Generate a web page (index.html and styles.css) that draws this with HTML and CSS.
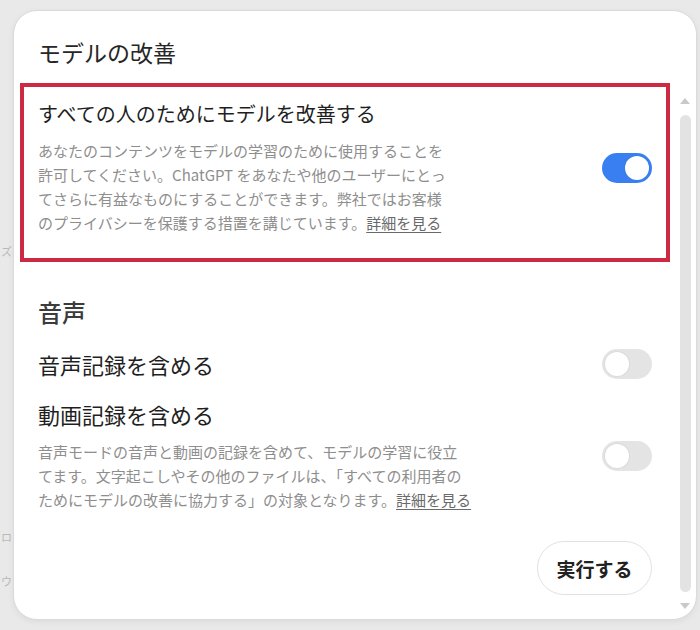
FILE: index.html
```html
<!DOCTYPE html>
<html lang="ja">
<head>
<meta charset="utf-8">
<title>モデルの改善</title>
<link rel="stylesheet" href="styles.css">
</head>
<body>
<div class="page">
  <div class="backdrop">
    <span class="bg-char c1">ズ</span>
    <span class="bg-char c2">ロ</span>
    <span class="bg-char c3">ウ</span>
  </div>
  <div class="card">
    <div class="main">
      <h1 class="title">モデルの改善</h1>

      <div class="row highlight">
        <div class="text">
          <div class="row-title small">すべての人のためにモデルを改善する</div>
          <p class="desc">あなたのコンテンツをモデルの学習のために使用することを<br>許可してください。ChatGPT をあなたや他のユーザーにとっ<br>てさらに有益なものにすることができます。弊社ではお客様<br>のプライバシーを保護する措置を講じています。<a class="link" href="#">詳細を見る</a></p>
        </div>
        <span class="toggle on"><span class="knob"></span></span>
      </div>

      <h2 class="section">音声</h2>

      <div class="row plain first">
        <div class="text">
          <div class="row-title">音声記録を含める</div>
        </div>
        <span class="toggle"><span class="knob"></span></span>
      </div>

      <div class="row plain second">
        <div class="text">
          <div class="row-title">動画記録を含める</div>
          <p class="desc">音声モードの音声と動画の記録を含めて、モデルの学習に役立<br>てます。文字起こしやその他のファイルは、「すべての利用者の<br>ためにモデルの改善に協力する」の対象となります。<a class="link" href="#">詳細を見る</a></p>
        </div>
        <span class="toggle"><span class="knob"></span></span>
      </div>

      <div class="footer">
        <button class="btn" type="button">実行する</button>
      </div>
    </div>
    <div class="scrollbar">
      <span class="arrow up"></span>
      <span class="thumb"></span>
      <span class="arrow down"></span>
    </div>
  </div>
</div>
</body>
</html>
```
FILE: styles.css
```css
* { box-sizing: border-box; }

html, body {
  margin: 0;
  padding: 0;
  width: 700px;
  height: 630px;
  overflow: hidden;
  background: #e9e9e9;
  font-family: "Noto Sans CJK JP", "Noto Sans", sans-serif;
}

.page {
  display: flex;
  padding-top: 10px;
  height: 630px;
}

.backdrop {
  width: 13px;
  flex: none;
  display: flex;
  flex-direction: column;
}

.bg-char {
  display: block;
  margin-left: 1px;
  font-size: 11px;
  line-height: 14px;
  color: #b9b9b9;
}
.c1 { margin-top: 234px; }
.c2 { margin-top: 272px; }
.c3 { margin-top: 30px; }

.card {
  width: 684px;
  height: 610px;
  flex: none;
  background: #ffffff;
  border: 1px solid #dadada;
  border-radius: 24px;
  box-shadow: 0 2px 6px rgba(0, 0, 0, 0.06);
  display: flex;
  overflow: hidden;
}

.main {
  flex: 1;
  padding: 26px 9px 0 6px;
  display: flex;
  flex-direction: column;
}

.title {
  margin: 0 0 16px 0;
  padding-left: 18px;
  font-size: 23px;
  line-height: 30px;
  font-weight: 400;
  color: #262626;
}

.row {
  display: flex;
  align-items: center;
  justify-content: space-between;
}

.highlight {
  border: 4px solid #cb2a42;
  padding: 13px 14px 23px 14px;
}

.plain {
  padding: 0 18px;
}
.plain.first { margin-top: 21px; }
.plain.second { margin-top: 20px; }

.row-title {
  font-size: 22px;
  line-height: 30px;
  color: #1f1f1f;
}
.row-title.small {
  font-size: 20px;
  line-height: 28px;
}

.desc {
  margin: 11px 0 0 0;
  font-size: 15px;
  line-height: 24px;
  color: #8e8e8e;
  white-space: nowrap;
}

.link {
  color: #6a6a6a;
  text-decoration: underline;
  text-underline-offset: 3px;
}

.section {
  margin: 34px 0 0 0;
  padding-left: 18px;
  font-size: 24px;
  line-height: 32px;
  font-weight: 500;
  color: #3c3c3c;
}

.toggle {
  flex: none;
  width: 50px;
  height: 30px;
  border-radius: 15px;
  background: #e4e4e4;
  padding: 3px;
  display: flex;
  justify-content: flex-start;
}
.toggle.on {
  background: #3a7ff1;
  justify-content: flex-end;
}
.knob {
  width: 24px;
  height: 24px;
  border-radius: 50%;
  background: #ffffff;
  box-shadow: 0 0 0 1px rgba(0, 0, 0, 0.04);
}

.footer {
  margin-top: 29px;
  padding-right: 18px;
  display: flex;
  justify-content: flex-end;
}

.btn {
  height: 54px;
  width: 115px;
  border: 1px solid #e1e1e1;
  border-radius: 27px;
  background: #ffffff;
  font-family: "Noto Sans CJK JP", "Noto Sans", sans-serif;
  font-size: 19px;
  font-weight: 700;
  color: #222222;
  padding: 0;
}

.scrollbar {
  width: 12px;
  flex: none;
  margin-right: 5px;
  padding: 87px 0 10px 0;
  display: flex;
  flex-direction: column;
  align-items: center;
}

.arrow {
  width: 0;
  height: 0;
  border-left: 5px solid transparent;
  border-right: 5px solid transparent;
}
.arrow.up {
  border-bottom: 6px solid #c9c9c9;
  margin-bottom: 11px;
}
.arrow.down {
  border-top: 6px solid #c9c9c9;
  margin-top: 11px;
}

.thumb {
  flex: 1;
  width: 11px;
  border-radius: 6px;
  background: #e3e3e3;
}
```
